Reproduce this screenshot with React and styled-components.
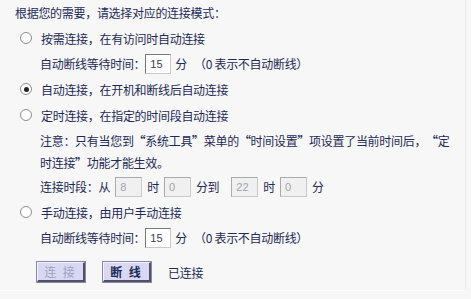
import React from 'react';
import styled, { createGlobalStyle } from 'styled-components';

const Global = createGlobalStyle`
  body {
    margin: 0;
    background: #f7f7f7;
    font-family: "Noto Sans CJK SC", "Liberation Sans", sans-serif;
    font-size: 12px;
    letter-spacing: -0.3px;
    color: #1e2a55;
  }
`;

export default function App() {
  return (
    <Page>
      <Global />
      <Line>根据您的需要，请选择对应的连接模式：</Line>

      <RadioRow>
        <Radio />
        <span>按需连接，在有访问时自动连接</span>
      </RadioRow>
      <SubRow>
        自动断线等待时间：<Field value="15" /> 分 <Hint>（0 表示不自动断线）</Hint>
      </SubRow>

      <RadioRow>
        <Radio checked />
        <span>自动连接，在开机和断线后自动连接</span>
      </RadioRow>

      <RadioRow>
        <Radio />
        <span>定时连接，在指定的时间段自动连接</span>
      </RadioRow>
      <Note>
        <span>注意：只有当您到</span>
        <Quote>“</Quote>
        <span>系统工具</span>
        <Quote $close>”</Quote>
        <span>菜单的</span>
        <Quote>“</Quote>
        <span>时间设置</span>
        <Quote $close>”</Quote>
        <span>项设置了当前时间后，</span>
        <Quote>“</Quote>
        <span>定</span>
        <br />
        <span>时连接</span>
        <Quote $close>”</Quote>
        <span>功能才能生效。</span>
      </Note>
      <SubRow>
        连接时段：从<Field value="8" disabled />时<Field value="0" disabled />分到
        <Field value="22" disabled $gap={12} />时<Field value="0" disabled />分
      </SubRow>

      <RadioRow>
        <Radio />
        <span>手动连接，由用户手动连接</span>
      </RadioRow>
      <SubRow>
        自动断线等待时间：<Field value="15" /> 分 <Hint>（0 表示不自动断线）</Hint>
      </SubRow>

      <Actions>
        <Button disabled>连 接</Button>
        <Button>断 线</Button>
        <Status>已连接</Status>
      </Actions>
    </Page>
  );
}

function Field({ value, disabled, $gap }) {
  return (
    <Box $disabled={disabled} $gap={$gap}>
      {value}
    </Box>
  );
}

const Page = styled.div`
  width: 466px;
  height: 291px;
  padding-left: 15px;
  box-sizing: border-box;
  border-right: 1px solid #ececec;
  border-bottom: 1px solid #fdfdfd;
  display: flex;
  flex-direction: column;
`;

const Line = styled.div`
  height: 25px;
  display: flex;
  align-items: center;
  white-space: nowrap;
`;

const RadioRow = styled(Line)`
  padding-left: 5px;
  gap: 9px;
  height: 26px;
`;

const Radio = styled.span`
  width: 10px;
  height: 10px;
  border-radius: 50%;
  border: 1px solid #8d8d8d;
  background: #fff;
  display: inline-flex;
  align-items: center;
  justify-content: center;
  &::after {
    content: '';
    width: 5px;
    height: 5px;
    border-radius: 50%;
    background: ${(p) => (p.checked ? '#222' : 'transparent')};
  }
`;

const SubRow = styled(Line)`
  padding-left: 25px;
`;

const Hint = styled.span`
  margin-left: 7px;
`;

const Box = styled.span`
  display: inline-flex;
  align-items: center;
  box-sizing: border-box;
  width: ${(p) => (p.$disabled ? 27 : 26)}px;
  height: 20px;
  margin: 0 ${(p) => (p.$disabled ? 5 : 4)}px 0 ${(p) => p.$gap ?? (p.$disabled ? 5 : 0)}px;
  padding-left: 4px;
  border: 1px solid ${(p) => (p.$disabled ? '#aaa' : '#777')};
  border-right-color: #c9c9c9;
  border-bottom-color: #c9c9c9;
  background: ${(p) => (p.$disabled ? '#f0f0f0' : '#fff')};
  color: ${(p) => (p.$disabled ? '#a3a3b0' : '#33405e')};
  font-family: "Liberation Sans", sans-serif;
  font-size: 11px;
  letter-spacing: 0;
`;

const Note = styled.div`
  padding-left: 25px;
  line-height: 22px;
  margin-top: 2px;
  white-space: nowrap;
`;

const Quote = styled.span`
  display: inline-block;
  width: 11.7px;
  text-align: ${(p) => (p.$close ? 'left' : 'right')};
  font-weight: bold;
`;

const Actions = styled.div`
  display: flex;
  align-items: center;
  margin-top: 12px;
  padding-left: 22px;
  gap: 18px;
`;

const Button = styled.span`
  width: 48px;
  height: 20px;
  box-sizing: border-box;
  display: inline-flex;
  align-items: center;
  justify-content: center;
  background: #d8d8f3;
  border: 1px solid #f2f2ff;
  border-right: 2px solid #50506a;
  border-bottom: 2px solid #50506a;
  outline: 1px solid #8a8aa8;
  font-weight: ${(p) => (p.disabled ? 'normal' : 'bold')};
  color: ${(p) => (p.disabled ? '#a0a0be' : '#1e2a55')};
  letter-spacing: 2px;
`;

const Status = styled.span`
  margin-left: -1px;
`;
